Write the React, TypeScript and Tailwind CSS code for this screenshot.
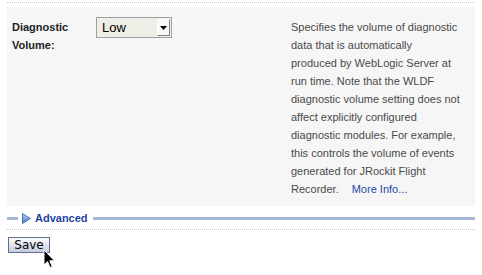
const descLines = [
  "Specifies the volume of diagnostic",
  "data that is automatically",
  "produced by WebLogic Server at",
  "run time. Note that the WLDF",
  "diagnostic volume setting does not",
  "affect explicitly configured",
  "diagnostic modules. For example,",
  "this controls the volume of events",
  "generated for JRockit Flight",
];

const App = () => {
  return (
    <div className="w-[482px] h-[275px] bg-white font-['Liberation_Sans',Arial,sans-serif] overflow-hidden">
      {/* top rule */}
      <div className="mx-[7px] pt-[2px] border-b border-dotted border-[#c8c8c8]" />

      {/* Setting panel */}
      <div className="mx-[7px] mt-[4px] h-[199px] bg-[#f6f6f6] flex">
        <div className="w-[89px] pl-[5px] pt-[11px] text-[11px] leading-[18px] font-bold text-[#222]">
          Diagnostic
          <br />
          Volume:
        </div>
        <div className="w-[195px] pt-[10px]">
          <div className="w-[76px] h-[21px] border border-[#a0a0a0] bg-[#efeee6] flex items-center justify-between">
            <span className="pl-[5px] text-[13px] text-black">Low</span>
            <span className="w-[13px] h-[17px] mr-[1px] bg-[#f8f8f8] border border-[#808080] border-l-white border-t-white flex items-center justify-center">
              <svg width="7" height="4" viewBox="0 0 7 4">
                <path d="M0 0 H7 L3.5 4 Z" fill="#000" />
              </svg>
            </span>
          </div>
        </div>
        <div className="w-[176px] pt-[11px] text-[11px] leading-[18px] text-[#4a4a4a] whitespace-nowrap">
          {descLines.map((l) => (
            <div key={l}>{l}</div>
          ))}
          <div>
            Recorder.
            <a className="ml-[13px] text-[#1f47a8] cursor-pointer">More Info...</a>
          </div>
        </div>
      </div>

      {/* Advanced section header */}
      <div className="mx-[7px] mt-[6px] flex items-center gap-[4px] h-[12px]">
        <div className="w-[11px] h-[3px] bg-[#a4b8d4]" />
        <svg width="9" height="11" viewBox="0 0 9 11">
          <defs>
            <linearGradient id="tri" x1="0" y1="0" x2="0" y2="1">
              <stop offset="0" stopColor="#c8daf4" />
              <stop offset="1" stopColor="#3f6fbf" />
            </linearGradient>
          </defs>
          <path d="M0.5 0.5 L8.5 5.5 L0.5 10.5 Z" fill="url(#tri)" stroke="#4a74b8" strokeWidth="1" />
        </svg>
        <span className="text-[11px] font-bold text-[#1e44a0] leading-[12px]">Advanced</span>
        <div className="flex-1 h-[3px] ml-[1px] bg-[#a4b8d4]" />
      </div>
      <div className="mx-[7px] mt-[5px] border-b border-dotted border-[#c8c8c8]" />

      {/* Save */}
      <div className="relative flex pl-[8px] pt-[7px]">
        <button className="w-[42px] h-[16px] border border-[#5f6f8a] bg-gradient-to-b from-[#fbfcfe] to-[#c5cde0] text-[12px] leading-[14px] text-black font-['DejaVu_Sans',sans-serif]">
          Save
        </button>
        <svg
          className="absolute left-[43px] top-[19px]"
          width="13"
          height="20"
          viewBox="0 0 13 20"
        >
          <path
            d="M1 1 L1 16 L4.5 12.5 L7 18.5 L9.3 17.5 L6.8 11.8 L11.5 11.8 Z"
            fill="#000"
            stroke="#fff"
            strokeWidth="1"
          />
        </svg>
      </div>
    </div>
  );
};

export default App;
